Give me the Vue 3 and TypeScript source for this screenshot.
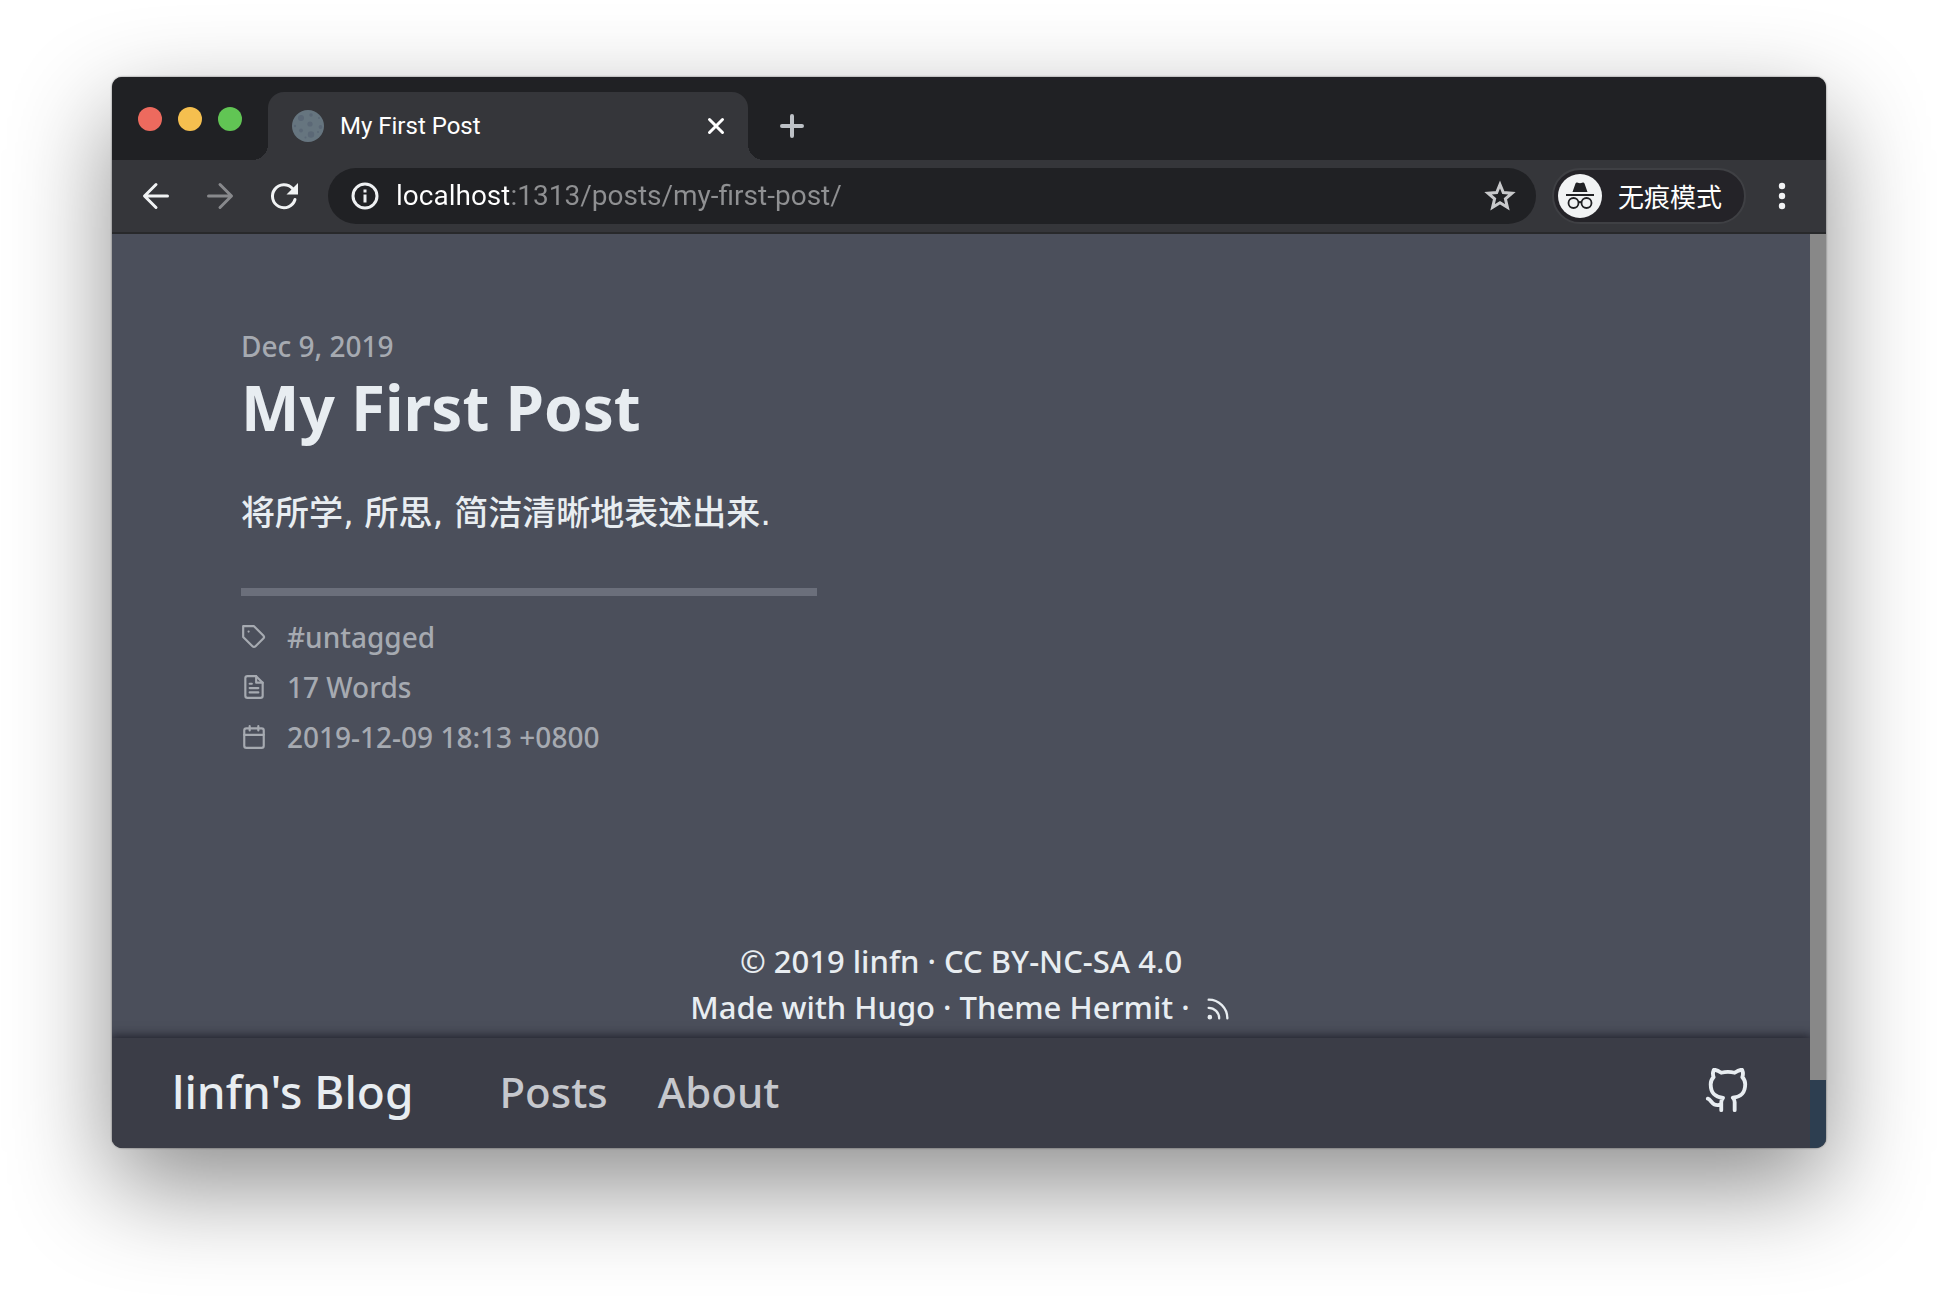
<script setup lang="ts">
import { ref } from 'vue'

interface NavItem {
  label: string
  href: string
}

const address = ref('localhost:1313/posts/my-first-post/')

const navItems: NavItem[] = [
  { label: 'Posts', href: '#posts' },
  { label: 'About', href: '#about' },
]
</script>

<template>
  <div class="desktop">
    <div class="window">
      <header class="tab-strip">
        <div class="lights">
          <button class="light red" type="button" aria-label="Close window"></button>
          <button class="light yellow" type="button" aria-label="Minimise window"></button>
          <button class="light green" type="button" aria-label="Zoom window"></button>
        </div>
        <div class="tab">
          <svg class="favicon" viewBox="0 0 32 32" aria-hidden="true">
            <circle cx="16" cy="16" r="16" fill="#66757f" />
            <g fill="#5b6876">
              <circle cx="9" cy="8" r="3" />
              <circle cx="18" cy="14" r="2.6" />
              <circle cx="19" cy="24.500" r="3.200" />
              <circle cx="19" cy="5" r="1.700" />
              <circle cx="9" cy="20.500" r="1.900" />
              <circle cx="28.500" cy="17" r="1.900" />
              <circle cx="27" cy="8" r="1" />
              <circle cx="3" cy="16" r="1.200" />
              <circle cx="13.500" cy="27.500" r="1" />
              <circle cx="26" cy="22" r="1" />
            </g>
          </svg>
          <span class="tab-title">My First Post</span>
          <button class="icon-button" type="button" aria-label="Close tab">
            <svg width="24" height="24" viewBox="0 0 24 24" fill="none" stroke="#fff" stroke-width="3" stroke-linecap="round">
              <path d="M5.500 5.500l13 13M18.500 5.500l-13 13" />
            </svg>
          </button>
        </div>
        <button class="icon-button new-tab" type="button" aria-label="New tab">
          <svg width="24" height="24" viewBox="0 0 24 24" fill="none" stroke="#bdc1c6" stroke-width="4" stroke-linecap="round">
            <path d="M12 2v20M2 12h20" />
          </svg>
        </button>
      </header>

      <div class="toolbar">
        <div class="history">
          <button class="icon-button" type="button" aria-label="Back">
            <svg width="32" height="32" viewBox="0 0 32 32" fill="none" stroke="#f1f3f4" stroke-width="3" stroke-linecap="round" stroke-linejoin="round">
              <path d="M27.500 16H5M16 4.500L4.500 16L16 27.500" />
            </svg>
          </button>
          <button class="icon-button" type="button" aria-label="Forward">
            <svg width="32" height="32" viewBox="0 0 32 32" fill="none" stroke="#88898c" stroke-width="3" stroke-linecap="round" stroke-linejoin="round">
              <path d="M4.500 16h22.500M16 4.500L27.500 16L16 27.500" />
            </svg>
          </button>
          <button class="icon-button" type="button" aria-label="Reload">
            <svg width="32" height="32" viewBox="0 0 32 32">
              <path d="M27 19.500A11.500 11.500 0 1 1 24.500 8.500" fill="none" stroke="#f1f3f4" stroke-width="3" stroke-linecap="round" />
              <path d="M30 3v11.500H18.500z" fill="#f1f3f4" />
            </svg>
          </button>
        </div>

        <div class="omnibox">
          <svg width="30" height="30" viewBox="0 0 30 30" aria-hidden="true">
            <circle cx="15" cy="15" r="12" fill="none" stroke="#eef0f2" stroke-width="3" />
            <path d="M13.500 8.500h3v3h-3zM13.500 13.500h3v8h-3z" fill="#eef0f2" />
          </svg>
          <input v-model="address" class="address" type="text" aria-label="Address" spellcheck="false" />
          <button class="icon-button" type="button" aria-label="Bookmark this page">
            <svg width="32" height="32" viewBox="0 0 32 32" fill="none" stroke="#c8c9cb" stroke-width="3">
              <path d="M16 4.500L19.300 12.500L28 13.200L21.400 18.900L23.400 27.300L16 22.800L8.600 27.300L10.600 18.900L4 13.200L12.700 12.500Z" />
            </svg>
          </button>
        </div>

        <button class="incognito" type="button">
          <svg width="44" height="44" viewBox="0 0 44 44" aria-hidden="true">
            <circle cx="22" cy="22" r="22" fill="#f1f3f4" />
            <path d="M14.500 18L17.500 9.500C18 8.400 18.800 8.300 19.800 8.800Q22 9.600 24.200 8.800C25.200 8.300 26 8.400 26.500 9.500L29.500 18Z" fill="#202124" />
            <path d="M8 21h28" stroke="#202124" stroke-width="1.800" />
            <g fill="none" stroke="#202124" stroke-width="1.800">
              <circle cx="15.500" cy="29" r="5" />
              <circle cx="28.500" cy="29" r="5" />
              <path d="M20.500 28.500q1.500-1 3 0" />
            </g>
          </svg>
          <span>无痕模式</span>
        </button>

        <button class="icon-button menu" type="button" aria-label="Menu">
          <svg width="32" height="32" viewBox="0 0 32 32" fill="#f1f3f4">
            <circle cx="16" cy="6" r="3.200" />
            <circle cx="16" cy="16" r="3.200" />
            <circle cx="16" cy="26" r="3.200" />
          </svg>
        </button>
      </div>

      <div class="viewport">
        <div class="page">
          <main class="post">
            <p class="date">Dec 9, 2019</p>
            <h1>My First Post</h1>
            <p class="body-text">将所学, 所思, 简洁清晰地表述出来.</p>
            <hr />
            <ul class="meta">
              <li>
                <svg viewBox="0 0 24 24" aria-hidden="true">
                  <path d="M20.590 13.410l-7.170 7.170a2 2 0 0 1-2.830 0L2 12V2h10l8.590 8.590a2 2 0 0 1 0 2.820z" />
                  <path d="M7 7h.010" />
                </svg>
                <span>#untagged</span>
              </li>
              <li>
                <svg viewBox="0 0 24 24" aria-hidden="true">
                  <path d="M14 2H6a2 2 0 0 0-2 2v16a2 2 0 0 0 2 2h12a2 2 0 0 0 2-2V8z" />
                  <path d="M14 2v6h6M16 13H8M16 17H8M10 9H8" />
                </svg>
                <span>17 Words</span>
              </li>
              <li>
                <svg viewBox="0 0 24 24" aria-hidden="true">
                  <rect x="3" y="4" width="18" height="18" rx="2" />
                  <path d="M16 2v4M8 2v4M3 10h18" />
                </svg>
                <span>2019-12-09 18:13 +0800</span>
              </li>
            </ul>
          </main>

          <footer class="credits">
            <p>© 2019 <a href="#home">linfn</a> · <a href="#license">CC BY-NC-SA 4.0</a></p>
            <p>
              Made with <a href="#hugo">Hugo</a> · Theme <a href="#hermit">Hermit</a> ·
              <a class="rss" href="#rss" aria-label="RSS feed">
                <svg width="28" height="28" viewBox="0 0 24 24" fill="none" stroke="currentColor" stroke-width="2" stroke-linecap="round">
                  <path d="M4 11a9 9 0 0 1 9 9M4 4a16 16 0 0 1 16 16" />
                  <circle cx="5" cy="19" r="1" />
                </svg>
              </a>
            </p>
          </footer>

          <nav class="site-nav">
            <a class="brand" href="#home">linfn's Blog</a>
            <a v-for="item in navItems" :key="item.label" class="nav-link" :href="item.href">{{ item.label }}</a>
            <a class="github" href="#github" aria-label="GitHub">
              <svg width="46" height="46" viewBox="0 0 24 24" fill="none" stroke="currentColor" stroke-width="2" stroke-linecap="round" stroke-linejoin="round">
                <path d="M9 19c-5 1.500-5-2.500-7-3m14 6v-3.870a3.370 3.370 0 0 0-.940-2.610c3.140-.350 6.440-1.540 6.440-7A5.440 5.440 0 0 0 20 4.770 5.070 5.070 0 0 0 19.910 1S18.730.650 16 2.480a13.380 13.380 0 0 0-7 0C6.270.650 5.090 1 5.090 1A5.070 5.070 0 0 0 5 4.770a5.440 5.440 0 0 0-1.500 3.780c0 5.420 3.300 6.610 6.440 7A3.370 3.370 0 0 0 9 18.130V22" />
              </svg>
            </a>
          </nav>
        </div>
        <div class="scroll-track">
          <div class="scroll-thumb"></div>
        </div>
      </div>
    </div>
  </div>
</template>

<style>
body {
  margin: 0;
  background: #fff;
}
</style>

<style scoped>
.desktop {
  padding: 77px 112px 148px;
  overflow: hidden;
  font-family: "Noto Sans", "Noto Sans CJK SC", sans-serif;
}

.window {
  border-radius: 10px;
  overflow: hidden;
  background: #35363a;
  box-shadow: 0 0 2px rgba(0, 0, 0, 0.6), 0 38px 100px rgba(0, 0, 0, 0.45);
}

button {
  margin: 0;
  padding: 0;
  border: 0;
  background: none;
  cursor: pointer;
}

svg {
  display: block;
  flex: none;
}

a {
  color: inherit;
  text-decoration: none;
}

.icon-button {
  display: flex;
  flex: none;
}

/* tab strip */
.tab-strip {
  display: flex;
  align-items: flex-end;
  height: 83px;
  background: #202124;
}

.lights {
  display: flex;
  align-self: center;
  gap: 16px;
  padding: 0 26px;
}

.light {
  width: 24px;
  height: 24px;
  border-radius: 50%;
}

.red {
  background: #ed6a5e;
}

.yellow {
  background: #f5bf4f;
}

.green {
  background: #61c554;
}

.tab {
  position: relative;
  display: flex;
  align-items: center;
  box-sizing: border-box;
  width: 480px;
  height: 68px;
  padding: 0 20px 0 24px;
  border-radius: 16px 16px 0 0;
  background: #35363a;
}

.tab::before,
.tab::after {
  content: "";
  position: absolute;
  bottom: 0;
  width: 16px;
  height: 16px;
}

.tab::before {
  right: 100%;
  background: radial-gradient(circle at 0 0, transparent 16px, #35363a 16px);
}

.tab::after {
  left: 100%;
  background: radial-gradient(circle at 100% 0, transparent 16px, #35363a 16px);
}

.favicon {
  width: 32px;
  height: 32px;
}

.tab-title {
  flex: 1;
  margin-left: 16px;
  color: #fff;
  font-family: Roboto, sans-serif;
  font-size: 24px;
  line-height: 32px;
}

.new-tab {
  margin: 0 0 22px 32px;
}

/* toolbar */
.toolbar {
  display: flex;
  align-items: center;
  height: 72px;
  border-bottom: 2px solid #28292b;
}

.history {
  display: flex;
  gap: 32px;
  padding: 0 28px;
}

.omnibox {
  display: flex;
  flex: 1;
  align-items: center;
  box-sizing: border-box;
  min-width: 0;
  height: 56px;
  padding: 0 20px 0 22px;
  border-radius: 28px;
  background: #202124;
}

.address {
  flex: 1;
  min-width: 0;
  margin: 0 0 0 16px;
  padding: 0;
  border: 0;
  outline: 0;
  font-family: Roboto, sans-serif;
  font-size: 28px;
  line-height: 40px;
  color: transparent;
  background: linear-gradient(90deg, #fff 113px, #8f9092 113px);
  background-clip: text;
  -webkit-background-clip: text;
}

.incognito {
  display: flex;
  align-items: center;
  gap: 16px;
  box-sizing: border-box;
  height: 56px;
  margin-left: 16px;
  padding: 0 22px 0 4px;
  border: 2px solid #3f4044;
  border-radius: 28px;
  background: #242328;
  color: #fff;
  font-family: "Noto Sans CJK SC", sans-serif;
  font-size: 26px;
  line-height: 40px;
}

.menu {
  margin: 0 28px 0 20px;
}

/* page */
.viewport {
  display: flex;
  background: #4b4f5b;
}

.page {
  flex: 1;
  min-width: 0;
  overflow: hidden;
  color: #e8edf1;
  font-weight: 500;
}

.post {
  max-width: 1440px;
  margin: 0 auto;
  padding-top: 93px;
}

p,
h1,
ul {
  margin: 0;
}

.date {
  color: #a6aab1;
  font-size: 28px;
  line-height: 38px;
}

h1 {
  font-size: 62px;
  font-weight: 700;
  line-height: 84px;
}

.body-text {
  margin-top: 38px;
  font-family: "DejaVu Sans", "Noto Sans CJK SC", sans-serif;
  font-size: 34px;
  line-height: 52px;
}

hr {
  width: 40%;
  height: 8px;
  margin: 49px 0 16px;
  border: 0;
  background: #6b6f7b;
}

.meta {
  padding: 0;
  list-style: none;
  color: #a6aab1;
  font-size: 28px;
  line-height: 50px;
}

.meta li {
  display: flex;
  align-items: center;
  gap: 20px;
}

.meta svg {
  width: 26px;
  height: 26px;
  fill: none;
  stroke: currentColor;
  stroke-width: 2;
  stroke-linecap: round;
  stroke-linejoin: round;
}

.credits {
  padding: 176px 0 8px;
  font-size: 31px;
  line-height: 46px;
  text-align: center;
}

.rss {
  display: inline-block;
  margin-left: 6px;
  vertical-align: -4px;
}

.site-nav {
  position: relative;
  display: flex;
  align-items: center;
  box-sizing: border-box;
  height: 110px;
  padding: 0 60px 4px;
  background: #3b3d47;
  box-shadow: 0 0 10px 2px rgba(20, 20, 30, 0.8);
}

.brand {
  margin-right: 36px;
  font-size: 46px;
}

.nav-link {
  margin-left: 50px;
  color: #c6c8cd;
  font-size: 42px;
}

.github {
  margin-left: auto;
}

.scroll-track {
  width: 16px;
  background: #2d3e50;
}

.scroll-thumb {
  height: 846px;
  background: #888;
}
</style>
